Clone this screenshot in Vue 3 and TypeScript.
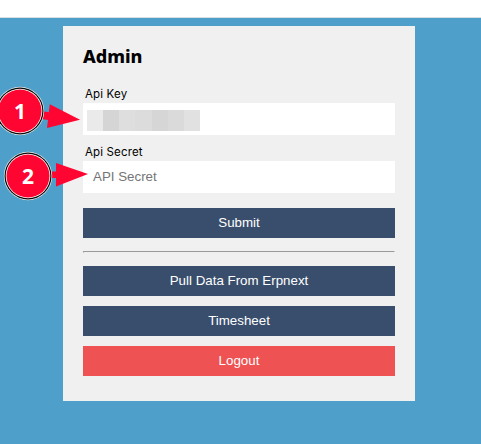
<script setup lang="ts">
import { ref } from 'vue'

const secret = ref('')
const maskShades = ['a', 'b', 'c', 'd', 'e', 'f', 'g']
const markers = [
  { n: 1, x: 20, y: 111 },
  { n: 2, x: 28, y: 176 },
]
</script>

<template>
  <div class="page">
    <header class="topbar"></header>
    <main class="stage">
      <form class="card" @submit.prevent>
        <h1 class="title">Admin</h1>
        <label class="label">Api Key</label>
        <div class="field masked">
          <span v-for="s in maskShades" :key="s" class="block" :class="s"></span>
        </div>
        <label class="label second" for="secret">Api Secret</label>
        <input id="secret" v-model="secret" class="field" type="text" placeholder="API Secret" />
        <button class="btn submit" type="submit">Submit</button>
        <hr class="rule" />
        <div class="actions">
          <button class="btn" type="button">Pull Data From Erpnext</button>
          <button class="btn" type="button">Timesheet</button>
          <button class="btn danger" type="button">Logout</button>
        </div>
      </form>
    </main>
    <svg class="markers" width="100" height="210" viewBox="0 0 100 210">
      <g fill="#ff0532">
        <path d="M42 111L48.8 112.2L49.8 104.3L80 119.8L47 128L48 120L42 119Z" />
        <path d="M50 171.5H56V163L88 174L56 186.5V178H50Z" />
      </g>
      <g v-for="m in markers" :key="m.n">
        <circle :cx="m.x" :cy="m.y" r="24.2" fill="#eee" />
        <circle :cx="m.x" :cy="m.y" r="23.5" fill="#080808" />
        <circle :cx="m.x" :cy="m.y" r="22.3" fill="#fff" />
        <circle :cx="m.x" :cy="m.y" r="21.5" fill="#ff0532" />
        <text :x="m.x" :y="m.y + 8" class="number">{{ m.n }}</text>
      </g>
    </svg>
  </div>
</template>

<style>
body {
  margin: 0;
}
</style>

<style scoped>
.page {
  position: relative;
  height: 444px;
  overflow: hidden;
  background: #4e9fc9;
}
.topbar {
  box-sizing: border-box;
  height: 18px;
  background: #fff;
  border-bottom: 1px solid #d9dfe0;
}
.stage {
  display: flex;
  padding: 8px 0 0 63px;
}
.card {
  box-sizing: border-box;
  display: flex;
  flex-direction: column;
  width: 352px;
  height: 375px;
  padding: 20px;
  background: #f0f0f0;
}
.title {
  margin: 0 0 19px;
  font: 800 18px/20px 'Noto Sans', sans-serif;
  color: #000;
}
.label {
  height: 18px;
  margin-left: 2px;
  font: 400 11.5px/18px Inter, sans-serif;
  letter-spacing: 0.15px;
  color: #000;
}
.label.second {
  margin-top: 8px;
}
.field {
  box-sizing: border-box;
  flex: none;
  width: 100%;
  height: 32px;
  margin: 0;
  padding: 0 10px 1px;
  border: 0;
  border-radius: 0;
  background: #fff;
  font: 13.333px 'Liberation Sans', sans-serif;
}
.field::placeholder {
  color: #757575;
}
.masked {
  display: flex;
  align-items: center;
  padding: 3px 4px 0;
}
.block {
  flex: none;
  width: 16px;
  height: 21px;
}
.a { background: #eaeaea; }
.b { background: #d5d5d5; }
.c { background: #dedede; }
.d { width: 17px; background: #dcdcdc; }
.e { background: #d6d6d6; }
.f { background: #dadada; }
.g { background: #e1e1e1; }
.btn {
  flex: none;
  width: 100%;
  height: 30px;
  padding: 0 0 1px;
  border: 0;
  background: #394e6c;
  color: #fff;
  font: 13.333px 'Liberation Sans', sans-serif;
}
.submit {
  margin-top: 15px;
}
.rule {
  box-sizing: border-box;
  width: 100%;
  height: 2px;
  margin: 13px 0;
  border: 1px solid;
  border-color: #9a9a9a #eee #eee #9a9a9a;
}
.actions {
  display: flex;
  flex-direction: column;
  gap: 10px;
}
.danger {
  background: #ee5253;
}
.markers {
  position: absolute;
  top: 0;
  left: 0;
}
.number {
  fill: #fff;
  font: 700 21px 'Noto Sans', sans-serif;
  text-anchor: middle;
}
</style>
